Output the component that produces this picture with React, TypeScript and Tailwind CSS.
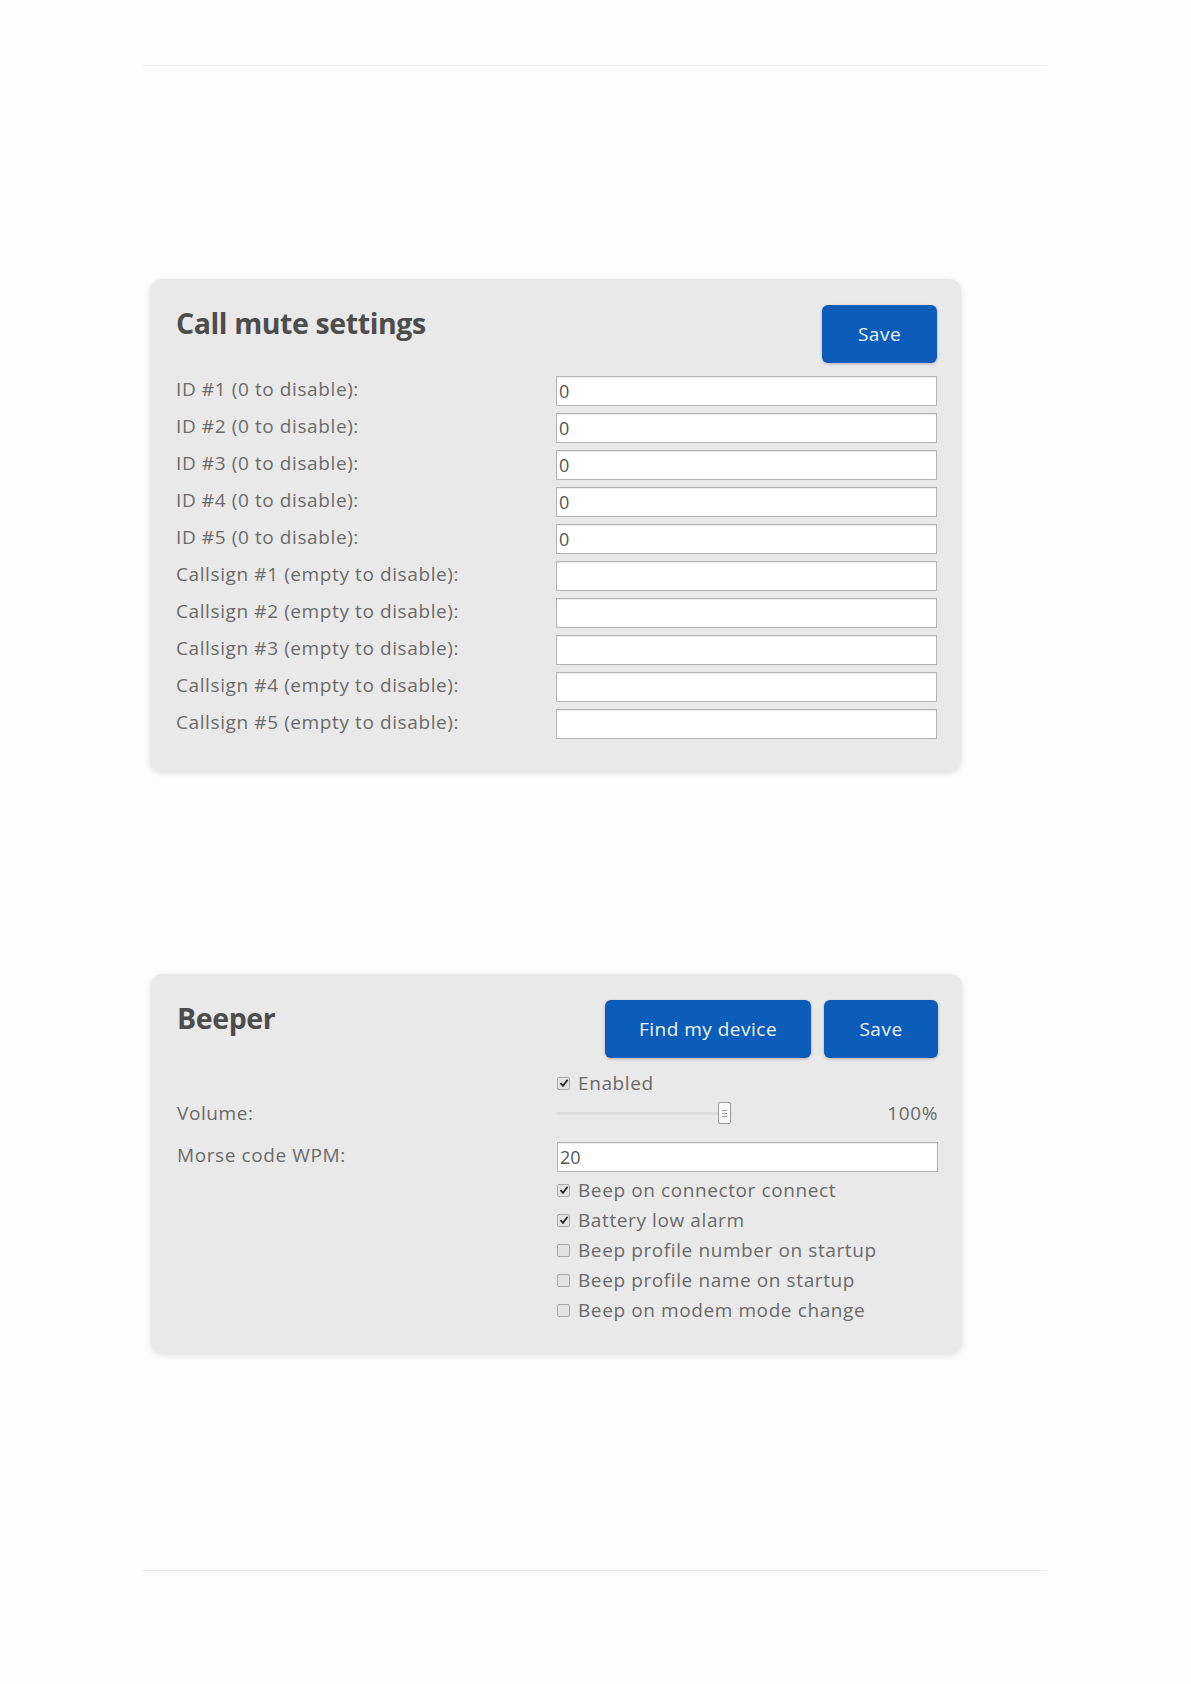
import React from "react";

const font = { fontFamily: '"Open Sans", "Noto Sans", sans-serif' };

function Btn({ children, w }: { children: React.ReactNode; w: string }) {
  return (
    <button
      className={`${w} h-[58px] rounded-[6px] bg-[#0b5db9] text-[#eef3fb] text-[19px] tracking-[0.5px] shadow-[0_1px_3px_rgba(0,0,0,0.25)]`}
    >
      {children}
    </button>
  );
}

function Check({ checked }: { checked: boolean }) {
  return (
    <span className="w-[13px] h-[13px] rounded-[2px] border border-[#a8a8a8] bg-[#e2e2e2] flex items-center justify-center shrink-0">
      {checked && (
        <svg width="10" height="10" viewBox="0 0 10 10">
          <path d="M1.5 5.2 L4 7.8 L8.6 1.8" stroke="#2a2a2a" strokeWidth="1.8" fill="none" />
        </svg>
      )}
    </span>
  );
}

function CheckRow({ label, checked }: { label: string; checked: boolean }) {
  return (
    <div className="h-[30px] flex items-center gap-[8px] text-[19px] tracking-[0.6px] text-[#6a6a6a]">
      <Check checked={checked} />
      <span>{label}</span>
    </div>
  );
}

function Row({ label, value }: { label: string; value: string }) {
  return (
    <div className="flex items-center h-[30px]">
      <div className="w-[380px] text-[19px] text-[#6b6b6b] tracking-[0.6px] -mt-[3px]">{label}</div>
      <div className="w-[381px] h-[30px] bg-white border border-[#b4b4b4] shadow-[inset_0_1px_1px_rgba(0,0,0,0.08)] flex items-center pl-[2px] text-[18px] text-[#555]">
        {value}
      </div>
    </div>
  );
}

export default function App() {
  const ids = [1, 2, 3, 4, 5];
  return (
    <div className="min-h-[1684px] bg-[#fdfdfd] flex flex-col" style={font}>
      <div className="mt-[65px] ml-[143px] w-[904px] h-px bg-[#efefef]" />

      <div className="mt-[213px] ml-[150px] w-[811px] rounded-[12px] bg-[#e9e9e9] shadow-[0_2px_6px_rgba(0,0,0,0.13)] pl-[26px] pr-[24px] pt-[26px] pb-[32px]">
        <div className="flex justify-between items-start">
          <h1 className="text-[28.5px] font-bold text-[#4d4d4d] tracking-[-0.4px] leading-none mt-[4px]">
            Call mute settings
          </h1>
          <Btn w="w-[115px]">Save</Btn>
        </div>
        <div className="mt-[13px] flex flex-col gap-[7px]">
          {ids.map((i) => (
            <Row key={"id" + i} label={`ID #${i} (0 to disable):`} value="0" />
          ))}
          {ids.map((i) => (
            <Row key={"cs" + i} label={`Callsign #${i} (empty to disable):`} value="" />
          ))}
        </div>
      </div>

      <div className="mt-[203px] ml-[151px] w-[811px] rounded-[12px] bg-[#e9e9e9] shadow-[0_2px_6px_rgba(0,0,0,0.13)] pl-[26px] pr-[24px] pt-[26px] pb-[28px]">
        <div className="flex justify-between items-start">
          <h1 className="text-[28.5px] font-bold text-[#4d4d4d] tracking-[-0.4px] leading-none mt-[4px]">
            Beeper
          </h1>
          <div className="flex gap-[13px]">
            <Btn w="w-[206px]">Find my device</Btn>
            <Btn w="w-[114px]">Save</Btn>
          </div>
        </div>
        <div className="mt-[10px] flex">
          <div className="w-[380px] flex flex-col">
            <div className="h-[30px]" />
            <div className="h-[30px] flex items-center text-[19px] tracking-[0.6px] text-[#6b6b6b]">Volume:</div>
            <div className="mt-[14px] h-[26px] flex items-center text-[19px] tracking-[0.6px] text-[#6b6b6b]">Morse code WPM:</div>
          </div>
          <div className="w-[381px] flex flex-col">
            <CheckRow label="Enabled" checked />
            <div className="h-[30px] flex items-center justify-between">
              <div className="relative w-[175px] h-[24px] flex items-center">
                <div className="w-full h-[3px] rounded-full bg-[#dcdcdc]" />
                <div className="absolute left-[161px] top-[1px] w-[13px] h-[22px] rounded-[2px] border border-[#9a9a9a] bg-[#f8f8f8] flex flex-col items-center justify-center gap-[2px]">
                  <span className="w-[5px] h-px bg-[#999]" />
                  <span className="w-[5px] h-px bg-[#999]" />
                  <span className="w-[5px] h-px bg-[#999]" />
                </div>
              </div>
              <span className="text-[19px] tracking-[0.6px] text-[#6b6b6b]">100%</span>
            </div>
            <div className="mt-[14px] w-[381px] h-[30px] bg-white border border-[#b4b4b4] shadow-[inset_0_1px_1px_rgba(0,0,0,0.08)] flex items-center pl-[2px] text-[18px] text-[#555]">
              20
            </div>
            <div className="mt-[3px] flex flex-col">
              <CheckRow label="Beep on connector connect" checked />
              <CheckRow label="Battery low alarm" checked />
              <CheckRow label="Beep profile number on startup" checked={false} />
              <CheckRow label="Beep profile name on startup" checked={false} />
              <CheckRow label="Beep on modem mode change" checked={false} />
            </div>
          </div>
        </div>
      </div>

      <div className="mt-[217px] ml-[143px] w-[904px] h-px bg-[#ececec]" />
    </div>
  );
}
